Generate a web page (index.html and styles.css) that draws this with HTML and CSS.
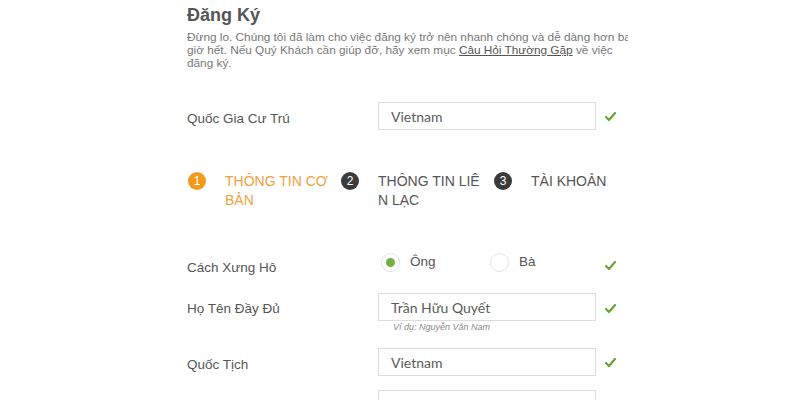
FILE: index.html
```html
<!DOCTYPE html>
<html lang="vi">
<head>
    <meta charset="UTF-8">
    <meta name="viewport" content="width=device-width, initial-scale=1.0">
    <title>Đăng Ký</title>
    <link rel="stylesheet" href="styles.css">
</head>
<body>
    <div class="page">
        <h1 class="title">Đăng Ký</h1>
        <div class="intro-wrap">
            <p class="intro">Đừng lo. Chúng tôi đã làm cho việc đăng ký trở nên nhanh chóng và dễ dàng hơn bao giờ hết. Nếu Quý Khách cần giúp đỡ, hãy xem mục <a href="#">Câu Hỏi Thường Gặp</a> về việc đăng ký.</p>
        </div>

        <div class="row row-country">
            <label class="label">Quốc Gia Cư Trú</label>
            <div class="field"><input class="text-input" type="text" value="Vietnam"></div>
            <span class="check"><svg width="11" height="9" viewBox="0 0 11 9"><path d="M1 5 L4 8 L10 1" fill="none" stroke="#6aa23a" stroke-width="2.2" stroke-linecap="round" stroke-linejoin="round"/></svg></span>
        </div>

        <div class="steps">
            <div class="step active">
                <span class="step-num">1</span>
                <span class="step-text">THÔNG TIN CƠ BẢN</span>
            </div>
            <div class="step">
                <span class="step-num">2</span>
                <span class="step-text">THÔNG TIN LIÊN LẠC</span>
            </div>
            <div class="step">
                <span class="step-num">3</span>
                <span class="step-text">TÀI KHOẢN</span>
            </div>
        </div>

        <div class="row row-title">
            <label class="label">Cách Xưng Hô</label>
            <div class="field radios">
                <span class="radio checked"><span class="radio-dot"></span>Ông</span>
                <span class="radio"><span class="radio-dot"></span>Bà</span>
            </div>
            <span class="check"><svg width="11" height="9" viewBox="0 0 11 9"><path d="M1 5 L4 8 L10 1" fill="none" stroke="#6aa23a" stroke-width="2.2" stroke-linecap="round" stroke-linejoin="round"/></svg></span>
        </div>

        <div class="row row-name">
            <label class="label">Họ Tên Đầy Đủ</label>
            <div class="field">
                <input class="text-input" type="text" value="Trần Hữu Quyết">
                <div class="hint">Ví dụ: Nguyễn Văn Nam</div>
            </div>
            <span class="check"><svg width="11" height="9" viewBox="0 0 11 9"><path d="M1 5 L4 8 L10 1" fill="none" stroke="#6aa23a" stroke-width="2.2" stroke-linecap="round" stroke-linejoin="round"/></svg></span>
        </div>

        <div class="row row-nation">
            <label class="label">Quốc Tịch</label>
            <div class="field"><input class="text-input" type="text" value="Vietnam"></div>
            <span class="check"><svg width="11" height="9" viewBox="0 0 11 9"><path d="M1 5 L4 8 L10 1" fill="none" stroke="#6aa23a" stroke-width="2.2" stroke-linecap="round" stroke-linejoin="round"/></svg></span>
        </div>

        <div class="row row-next">
            <span class="label"></span>
            <div class="field"><input class="text-input" type="text" value=""></div>
        </div>
    </div>
</body>
</html>
```

FILE: styles.css
```css
body {
    margin: 0;
    background: #fff;
    font-family: "Liberation Sans", Arial, sans-serif;
    color: #555;
    overflow: hidden;
    height: 400px;
}

.page {
    padding-left: 187px;
}

.title {
    margin: 0;
    padding-top: 4px;
    font-size: 18px;
    line-height: 22px;
    color: #555;
}

.intro-wrap {
    width: 441px;
    overflow: hidden;
}

.intro {
    width: 453px;
    margin: 5px 0 0;
    font-size: 11.8px;
    line-height: 13px;
    color: #777;
}

.intro a {
    color: #555;
}

.row {
    display: grid;
    grid-template-columns: 191px 218px 20px;
    align-items: center;
}

.label {
    font-size: 13.5px;
    color: #555;
}

.check {
    justify-self: end;
    display: flex;
}

.text-input {
    display: block;
    box-sizing: border-box;
    width: 218px;
    height: 28px;
    border: 1px solid #dcdcdc;
    padding: 0 12px;
    font-family: Lato, sans-serif;
    font-size: 14px;
    color: #5a5a5a;
    background: #fff;
    outline: none;
}

.row-country {
    margin-top: 32px;
}

.row-country .label {
    padding-top: 4px;
}

.steps {
    display: flex;
    margin-top: 42px;
}

.step {
    display: flex;
    align-items: flex-start;
    width: 153px;
    font-size: 14px;
    line-height: 19px;
    color: #555;
}

.step-num {
    flex: none;
    width: 18px;
    height: 18px;
    margin: 0 19px 0 1px;
    border-radius: 50%;
    background: #3b3b3b;
    color: #fff;
    font-size: 12px;
    line-height: 18px;
    text-align: center;
}

.step-text {
    width: 105px;
    word-break: break-all;
}

.step.active {
    color: #f0a040;
}

.step.active .step-num {
    background: #f39a1e;
}

.row-title {
    margin-top: 41px;
    align-items: start;
}

.row-title .label {
    padding-top: 9px;
}

.radios {
    display: flex;
}

.radio {
    display: flex;
    align-items: center;
    width: 111px;
    font-size: 13.5px;
    line-height: 18px;
}

.radio-dot {
    box-sizing: border-box;
    width: 19px;
    height: 19px;
    margin: 2px 10px 0 3px;
    border: 1px solid #e3e3e3;
    border-radius: 50%;
    background: #fff;
    position: relative;
}

.radio.checked .radio-dot::after {
    content: "";
    position: absolute;
    left: 4px;
    top: 4px;
    width: 9px;
    height: 9px;
    border-radius: 50%;
    background: #72b043;
}

.row-title .check {
    padding-top: 10px;
}

.row-name {
    margin-top: 18px;
    align-items: start;
}

.row-name .label {
    padding-top: 8px;
}

.row-name .check {
    padding-top: 11px;
}

.hint {
    margin: 1px 0 0 15px;
    font-size: 9px;
    font-style: italic;
    color: #888;
}

.row-nation {
    margin-top: 16px;
}

.row-nation .label {
    padding-top: 4px;
}

.row-next {
    margin-top: 14px;
}
```
